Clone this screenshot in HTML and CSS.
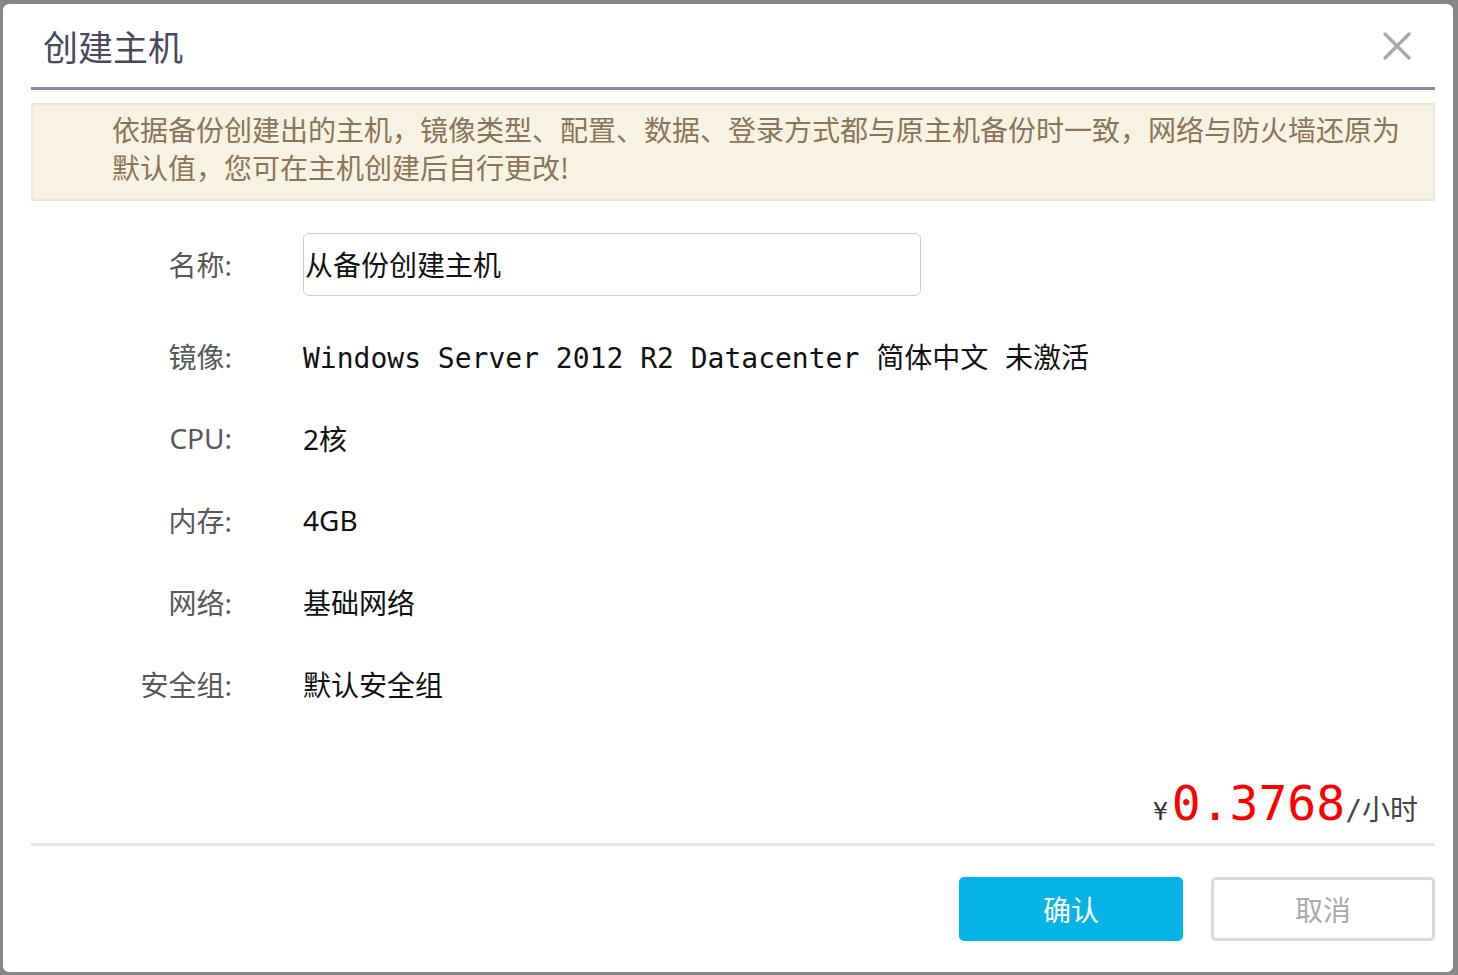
FILE: index.html
```html
<!DOCTYPE html>
<html lang="zh-CN">
<head>
<meta charset="utf-8">
<title>创建主机</title>
<link rel="stylesheet" href="styles.css">
</head>
<body>
<div class="dialog">
  <div class="dialog-header">
    <h1 class="dialog-title">创建主机</h1>
    <button class="close-btn" aria-label="关闭">
      <svg width="30" height="30" viewBox="0 0 30 30"><path d="M3 3 L27 27 M27 3 L3 27" stroke="#a9a9a9" stroke-width="3.4" stroke-linecap="round" fill="none"/></svg>
    </button>
  </div>
  <div class="notice">依据备份创建出的主机，镜像类型、配置、数据、登录方式都与原主机备份时一致，网络与防火墙还原为默认值，您可在主机创建后自行更改!</div>
  <div class="form">
    <div class="row row-name">
      <div class="label">名称:</div>
      <div class="value"><input class="text-input" type="text" value="从备份创建主机"></div>
    </div>
    <div class="row">
      <div class="label">镜像:</div>
      <div class="value mono">Windows Server 2012 R2 Datacenter 简体中文 未激活</div>
    </div>
    <div class="row">
      <div class="label">CPU:</div>
      <div class="value">2核</div>
    </div>
    <div class="row">
      <div class="label">内存:</div>
      <div class="value">4GB</div>
    </div>
    <div class="row">
      <div class="label">网络:</div>
      <div class="value">基础网络</div>
    </div>
    <div class="row">
      <div class="label">安全组:</div>
      <div class="value">默认安全组</div>
    </div>
  </div>
  <div class="price-row">
    <span class="currency">¥</span><span class="price">0.3768</span><span class="unit">/小时</span>
  </div>
  <div class="footer">
    <button class="btn btn-primary">确认</button>
    <button class="btn btn-cancel">取消</button>
  </div>
</div>
</body>
</html>
```

FILE: styles.css
```css
html, body {
  margin: 0;
  padding: 0;
}
body {
  background: #878787;
  width: 1458px;
  height: 975px;
  overflow: hidden;
  font-family: "Noto Sans", "Noto Sans CJK SC", sans-serif;
}
.dialog {
  box-sizing: border-box;
  margin: 4px 5px 3px 3px;
  width: 1450px;
  height: 968px;
  background: #fff;
  border-radius: 6px;
  padding: 0 18px 0 28px;
  display: flex;
  flex-direction: column;
}
.dialog-header {
  flex: none;
  height: 86px;
  border-bottom: 3px solid #8b889f;
  display: flex;
  align-items: center;
  justify-content: space-between;
  padding: 0 23px 0 12px;
  box-sizing: border-box;
}
.dialog-title {
  margin: 0;
  font-weight: normal;
  font-size: 35px;
  color: #49495c;
  font-family: "Noto Sans CJK SC", sans-serif;
  line-height: 1;
}
.close-btn {
  border: 0;
  background: none;
  padding: 0;
  width: 30px;
  height: 30px;
}
.close-btn svg {
  display: block;
}
.notice {
  flex: none;
  margin-top: 13px;
  background: #f8f2e2;
  border: 2px solid #eee8d8;
  padding: 5px 10px 13px 79px;
  font-family: "Noto Sans CJK SC", sans-serif;
  font-size: 28px;
  line-height: 38px;
  color: #8b7558;
}
.form {
  flex: none;
  margin-top: 31px;
  display: flex;
  flex-direction: column;
}
.row {
  display: flex;
  align-items: center;
  height: 82px;
  box-sizing: border-box;
  padding-bottom: 4px;
}
.row-name {
  height: 64px;
  padding-bottom: 0;
  margin-bottom: 21px;
}
.label {
  width: 201px;
  text-align: right;
  color: #585858;
  font-size: 28px;
  flex: none;
}
.value {
  margin-left: 71px;
  color: #111;
  font-size: 28px;
  white-space: nowrap;
}
.value.mono {
  font-family: "DejaVu Sans Mono", "Noto Sans CJK SC", monospace;
}
.text-input {
  box-sizing: border-box;
  width: 618px;
  height: 63px;
  border: 1px solid #cfcfcf;
  border-radius: 6px;
  padding: 0 1px;
  font-family: "Noto Sans CJK SC", sans-serif;
  font-size: 28px;
  color: #111;
  outline: none;
  display: block;
}
.price-row {
  flex: none;
  height: 119px;
  box-sizing: border-box;
  display: flex;
  justify-content: flex-end;
  align-items: baseline;
  padding: 52px 17px 0 0;
  border-bottom: 3px solid #e7e7e7;
  line-height: 1;
  font-family: "DejaVu Sans Mono", "Noto Sans CJK SC", monospace;
}
.currency {
  font-size: 24px;
  color: #333;
  margin-right: 4px;
}
.price {
  font-size: 48px;
  color: #ff0000;
}
.unit {
  font-size: 28px;
  color: #444;
}
.footer {
  flex: none;
  display: flex;
  justify-content: flex-end;
  gap: 28px;
  margin-top: 31px;
}
.btn {
  box-sizing: border-box;
  width: 224px;
  height: 64px;
  border-radius: 5px;
  font-family: "Noto Sans CJK SC", sans-serif;
  font-size: 28px;
  padding: 0;
  cursor: pointer;
}
.btn-primary {
  background: #06b4e8;
  border: 0;
  color: #fff;
}
.btn-cancel {
  background: #fff;
  border: 3px solid #dadada;
  color: #aaa;
}
```
